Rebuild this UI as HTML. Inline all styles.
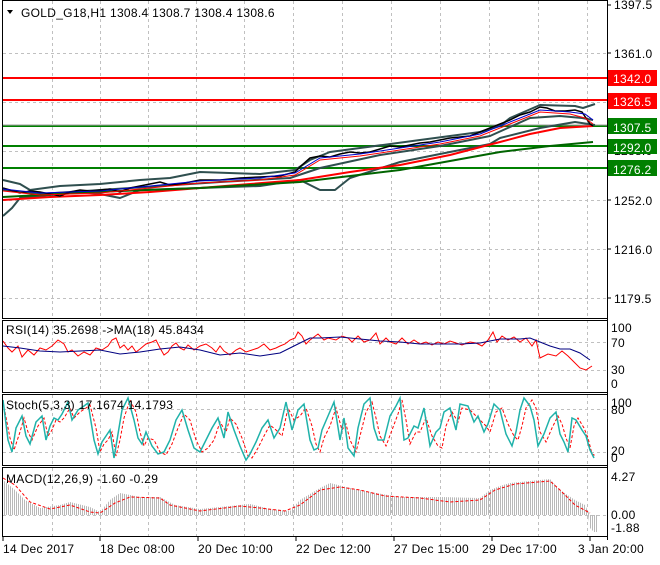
<!DOCTYPE html>
<html><head><meta charset="utf-8"><style>
html,body{margin:0;padding:0;background:#fff;}
body{width:660px;height:560px;overflow:hidden;position:relative;font-family:"Liberation Sans",sans-serif;}
svg text{font-family:"Liberation Sans",sans-serif;font-size:12px;fill:#000;letter-spacing:0.3px;}
</style></head><body>
<svg width="660" height="560" viewBox="0 0 660 560" xmlns="http://www.w3.org/2000/svg">
<defs>
<pattern id="hist" width="2" height="10" patternUnits="userSpaceOnUse"><rect x="0" y="0" width="1" height="10" fill="#b8b8b8"/></pattern>
</defs>
<rect width="660" height="560" fill="#fff"/>
<g stroke="#c0c0c0" stroke-dasharray="3,3" stroke-width="1">
<path d="M52.5 1V318M100.5 1V318M148.5 1V318M196.5 1V318M244.5 1V318M293.5 1V318M342.5 1V318M391.5 1V318M440.5 1V318M489.5 1V318M538.5 1V318M587.5 1V318"/>
<path d="M52.5 320V392M100.5 320V392M148.5 320V392M196.5 320V392M244.5 320V392M293.5 320V392M342.5 320V392M391.5 320V392M440.5 320V392M489.5 320V392M538.5 320V392M587.5 320V392"/>
<path d="M52.5 395V465M100.5 395V465M148.5 395V465M196.5 395V465M244.5 395V465M293.5 395V465M342.5 395V465M391.5 395V465M440.5 395V465M489.5 395V465M538.5 395V465M587.5 395V465"/>
<path d="M52.5 468V536M100.5 468V536M148.5 468V536M196.5 468V536M244.5 468V536M293.5 468V536M342.5 468V536M391.5 468V536M440.5 468V536M489.5 468V536M538.5 468V536M587.5 468V536"/>
<path d="M3 53.5H607M3 102.5H607M3 151.5H607M3 200.5H607M3 249.5H607M3 298.5H607"/>
<path d="M3 342.5H607M3 370.5H607M3 409.5H607M3 452.5H607M3 515.5H607"/>
</g>
<g stroke-width="2">
<path d="M3 78H607" stroke="#ff0000"/>
<path d="M3 100H607" stroke="#ff0000"/>
<path d="M3 126H607" stroke="#008000"/>
<path d="M3 146H607" stroke="#008000"/>
<path d="M3 168H607" stroke="#008000"/>
</g>
<path d="M3 125H607" stroke="#a0a0a0" stroke-width="1"/>
<g fill="none" stroke-width="2" stroke-linejoin="round">
<polyline stroke="#2f4f4f" points="3,180 20,184 30,190 60,186 100,184 140,180 170,178 200,172 260,174 295,170 310,160 330,152 360,148 420,140 480,132 500,126 510,118 540,105 575,106 583,108 595,104"/>
<polyline stroke="#2f4f4f" points="3,216 12,208 20,198 40,196 80,192 100,194 120,198 140,190 200,188 260,186 300,180 320,190 335,190 350,178 400,162 460,150 490,144 500,138 540,128 575,122 595,125"/>
<polyline stroke="#2f4f4f" points="3,190 40,194 100,190 160,186 220,182 290,178 320,168 380,155 440,146 490,136 530,118 560,116 582,118 593,120"/>
<polyline stroke="#ff0000" points="3,200 50,197 100,195 150,192 200,188 250,184 300,180 350,172 400,165 450,155 500,142 530,134 560,128 593,126"/>
<polyline stroke="#006400" points="3,197 60,194 120,191 200,188 250,185 300,182 350,176 400,170 450,161 500,152 550,146 593,142"/>
</g>
<polyline fill="none" stroke="#000" stroke-width="1.5" points="3,188 10,190 20,193 30,191 40,192 50,194 60,196 70,192 80,190 90,191 100,190 110,189 120,192 130,188 140,186 150,184 160,182 170,185 180,184 190,182 200,180 220,180 240,178 260,177 280,176 295,172 302,165 310,158 320,156 330,157 340,154 350,152 360,153 370,152 380,149 390,146 400,147 410,145 420,143 430,142 440,140 450,138 460,137 470,136 480,132 490,128 500,124 510,120 520,115 530,112 540,107 547,108 555,111 565,111 575,110 582,112 586,118 590,124 593,126"/>
<polyline fill="none" stroke="#0000cc" stroke-width="1" points="3,189 40,193 100,191 150,186 200,181 260,178 295,173 320,158 360,154 400,148 440,142 480,134 510,122 540,110 570,112 585,114 593,120"/>
<polyline fill="none" stroke="#ff0000" stroke-width="1" points="3,191 40,195 100,193 150,188 200,183 260,180 295,175 320,160 360,156 400,150 440,144 480,136 510,124 540,112 570,114 585,118 593,124"/>
<polyline fill="none" stroke="#ff0000" stroke-width="1" points="3,341 8,348 12,352 18,346 22,357 28,350 34,355 40,348 46,350 52,346 58,340 64,344 68,352 72,350 78,356 84,352 90,355 96,348 102,350 108,346 112,340 116,338 120,348 124,345 128,350 132,346 136,352 140,349 146,344 152,342 156,340 160,348 164,355 168,352 172,346 176,343 180,348 184,350 188,345 194,350 200,346 206,344 212,348 216,352 220,346 224,351 230,355 236,350 240,348 246,352 252,350 258,348 264,344 270,350 276,348 280,346 285,344 290,340 295,338 298,332 302,336 306,344 310,340 318,334 324,340 328,338 336,340 342,336 348,338 352,342 358,336 364,342 370,340 376,333 380,344 386,338 390,342 396,344 402,338 408,344 414,340 420,344 426,342 432,345 438,342 444,344 450,341 456,343 462,345 470,342 476,343 482,346 488,340 493,332 497,342 502,336 508,340 514,337 520,342 526,338 532,346 536,340 540,358 548,354 556,356 562,351 568,356 574,362 580,368 586,370 592,366"/>
<polyline fill="none" stroke="#000080" stroke-width="1" points="3,346 20,348 40,351 60,352 80,351 100,350 120,354 140,352 160,349 180,347 200,350 220,355 240,353 260,356 280,353 290,348 300,343 310,338 320,338 340,337 350,338 360,339 380,341 400,342 420,344 440,344 460,344 480,343 500,339 520,339 530,338 540,342 550,346 560,349 570,349 580,353 590,360"/>
<polyline fill="none" stroke="#ff0000" stroke-width="1" stroke-dasharray="3,2" points="5,412 10,438 14,450 20,432 24,418 28,432 32,440 38,426 44,418 48,436 52,430 56,420 60,422 64,418 70,408 74,418 80,412 86,408 90,405 96,428 100,452 104,444 108,440 112,432 116,456 120,440 124,418 130,400 136,412 140,432 144,446 148,438 154,440 160,452 166,455 172,444 178,428 184,414 190,420 196,440 202,452 208,448 214,440 220,422 226,432 230,418 236,424 242,438 248,456 252,458 258,448 264,436 270,425 276,430 282,436 288,408 294,420 300,416 306,408 312,426 316,444 320,452 324,438 330,426 336,408 342,430 346,424 350,440 356,452 360,436 366,412 372,402 376,418 380,436 386,446 392,430 398,414 402,400 406,420 410,444 416,432 420,432 426,418 432,436 438,446 442,448 446,426 452,412 458,422 462,408 470,410 476,416 480,420 486,426 490,432 496,412 502,408 508,424 514,436 518,440 522,426 526,408 532,400 536,408 540,432 546,442 552,428 558,416 562,424 566,438 570,448 574,426 578,418 584,428 588,438 592,454 596,456"/>
<polyline fill="none" stroke="#20b2aa" stroke-width="1.5" points="3,400 8,440 12,452 16,428 22,416 26,436 30,444 36,422 42,416 46,440 50,426 54,418 58,420 62,414 68,402 72,420 78,410 84,406 88,403 94,440 98,454 102,442 106,436 110,430 114,458 118,434 122,410 128,398 134,420 138,438 142,444 146,432 152,446 158,454 164,452 170,440 176,420 182,410 188,430 194,448 200,452 206,440 212,428 218,418 224,438 228,412 234,430 240,446 246,460 250,454 256,442 262,428 268,420 274,438 280,428 286,402 292,430 298,410 304,404 310,440 314,450 318,448 322,430 328,416 334,402 340,440 344,418 348,448 354,456 358,428 364,404 370,398 374,428 378,440 384,440 390,416 396,406 400,398 404,440 408,438 414,426 418,428 424,408 430,446 436,432 440,428 444,412 450,408 456,430 460,404 468,406 474,422 478,416 484,432 488,424 494,404 500,410 506,434 512,446 516,432 520,410 524,398 530,406 534,420 538,446 544,434 550,418 556,412 560,434 564,442 568,452 572,418 576,420 582,430 586,436 590,450 594,458"/>
<polygon fill="url(#hist)" points="3,515 3,480 15,490 25,500 40,508 60,505 70,502 90,507 100,512 110,500 120,493 140,497 160,497 175,505 200,509 230,506 250,504 270,509 290,511 300,500 310,494 320,488 330,483 350,488 370,492 400,497 440,497 480,498 490,490 500,486 510,483 530,481 550,479 560,490 575,500 585,505 590,515"/>
<polygon fill="url(#hist)" points="588,515 598,515 598,532 594,532 590,528"/>
<polyline fill="none" stroke="#ff0000" stroke-width="1" stroke-dasharray="3,2" points="3,478 15,485 30,502 50,509 70,505 90,512 100,513 115,503 130,497 160,498 170,505 200,511 240,506 260,508 285,511 300,505 320,490 340,487 360,490 385,496 420,498 450,502 480,500 495,490 515,484 550,481 560,490 575,505 590,513"/>
<g fill="none" stroke="#000" stroke-width="1">
<rect x="2.5" y="0.5" width="605" height="318"/>
<rect x="2.5" y="320.5" width="605" height="72"/>
<rect x="2.5" y="394.5" width="605" height="71"/>
<rect x="2.5" y="467.5" width="605" height="69"/>
<path d="M607.5 0V540"/>
</g>
<g stroke="#000"><path d="M607 5H611M607 53H611M607 102H611M607 151H611M607 200H611M607 249H611M607 298H611M3 537V541M100 537V541M198 537V541M296 537V541M394 537V541M492 537V541M590 537V541"/></g>
<text x="614" y="9">1397.5</text>
<text x="614" y="58">1361.0</text>
<text x="614" y="155">1288.0</text>
<text x="614" y="205">1252.0</text>
<text x="614" y="254">1216.0</text>
<text x="614" y="303">1179.5</text>
<rect x="608" y="70" width="49" height="16" fill="#ff0000"/><text x="613" y="83" style="fill:#fff">1342.0</text>
<rect x="608" y="93" width="49" height="16" fill="#ff0000"/><text x="613" y="106" style="fill:#fff">1326.5</text>
<rect x="608" y="118" width="49" height="16" fill="#008000"/><text x="613" y="132" style="fill:#fff">1307.5</text>
<rect x="608" y="139" width="49" height="15" fill="#008000"/><text x="613" y="152" style="fill:#fff">1292.0</text>
<rect x="608" y="160" width="49" height="16" fill="#008000"/><text x="613" y="174" style="fill:#fff">1276.2</text>
<text x="611" y="332">100</text><text x="611" y="347">70</text><text x="611" y="374">30</text><text x="611" y="388">0</text>
<text x="611" y="407">100</text><text x="611" y="414">80</text><text x="611" y="455">20</text><text x="611" y="462">0</text>
<text x="611" y="481">4.27</text><text x="611" y="519">0.00</text><text x="611" y="532">-1.88</text>
<text x="3" y="553">14 Dec 2017</text><text x="100" y="553">18 Dec 08:00</text><text x="198" y="553">20 Dec 10:00</text><text x="296" y="553">22 Dec 12:00</text><text x="394" y="553">27 Dec 15:00</text><text x="482" y="553">29 Dec 17:00</text><text x="578" y="553">3 Jan 20:00</text>
<path d="M7 10L13 10L10 14Z" fill="#000"/>
<text x="21" y="17">GOLD_G18,H1  1308.4 1308.7 1308.4 1308.6</text>
<text x="6" y="334">RSI(14) 35.2698  -&gt;MA(18) 45.8434</text>
<text x="6" y="409">Stoch(5,3,3) 17.1674 14.1793</text>
<text x="6" y="483">MACD(12,26,9) -1.60 -0.29</text>
</svg>
</body></html>
